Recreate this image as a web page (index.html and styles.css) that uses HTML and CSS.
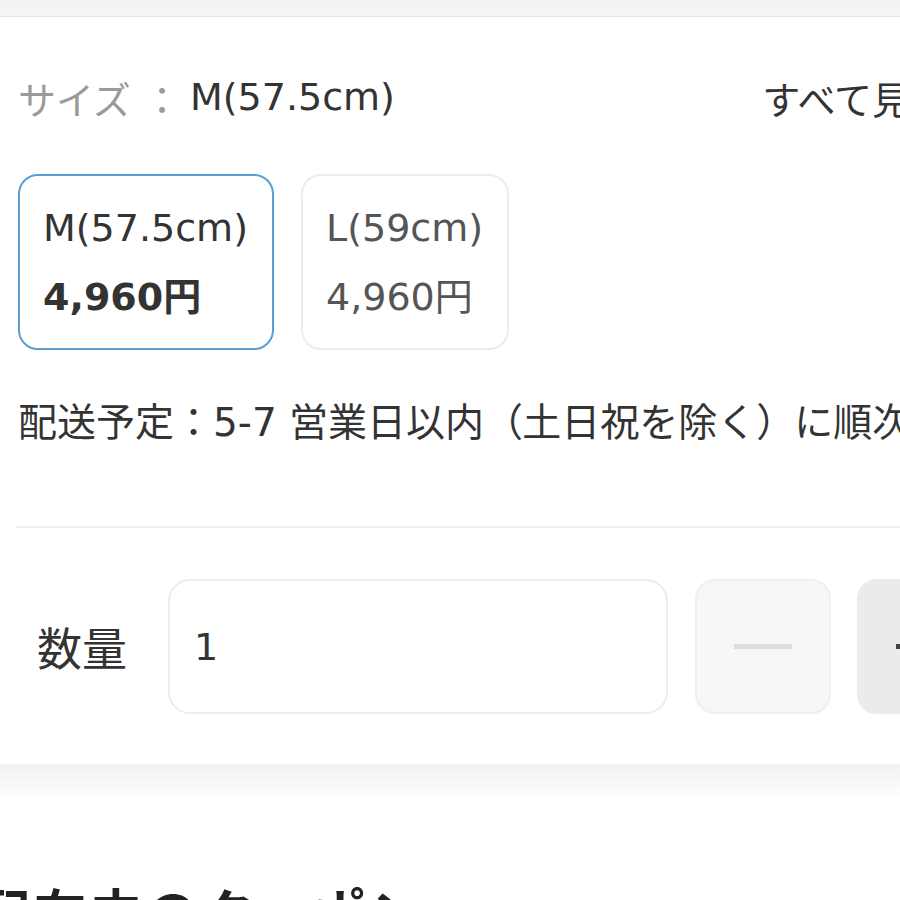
FILE: index.html
```html
<!DOCTYPE html>
<html lang="ja">
<head>
    <meta charset="UTF-8">
    <meta name="viewport" content="width=device-width, initial-scale=1.0">
    <title>サイズ選択</title>
    <link rel="stylesheet" href="styles.css">
</head>
<body>
    <div class="top-edge"></div>

    <section class="options">
        <div class="size-head">
            <span class="size-label">サイズ ：</span>
            <span class="size-value">M(57.5cm)</span>
            <a class="see-all" href="#">すべて見る</a>
        </div>

        <!-- size options -->
        <div class="size-list">
            <div class="size-card selected">
                <div class="size-name">M(57.5cm)</div>
                <div class="size-price">4,960円</div>
            </div>
            <div class="size-card">
                <div class="size-name">L(59cm)</div>
                <div class="size-price">4,960円</div>
            </div>
        </div>

        <p class="delivery">配送予定：5-7 営業日以内<span class="paren">（</span>土日祝を除く<span class="paren">）</span>に順次発送</p>

        <div class="divider"></div>

        <!-- quantity -->
        <div class="qty-row">
            <span class="qty-label">数量</span>
            <div class="qty-input">1</div>
            <button class="qty-btn minus" type="button"><span class="bar"></span></button>
            <button class="qty-btn plus" type="button"><span class="bar"></span></button>
        </div>
    </section>

    <div class="section-gap"></div>

    <h2 class="coupon-title">配布中のクーポン</h2>
</body>
</html>
```

FILE: styles.css
```css
body {
    font-family: "DejaVu Sans", "Noto Sans CJK JP", sans-serif;
    margin: 0;
    padding: 0;
    background-color: #ffffff;
    color: #333333;
    overflow: hidden;
    height: 900px;
}

.top-edge {
    height: 16px;
    background: linear-gradient(#f2f2f2, #f7f7f7);
}

.options {
    width: 966px;
    box-sizing: border-box;
    padding: 54px 18px 50px 18px;
    border-top: 1px solid #e6e6e6;
    background-color: #ffffff;
}

.size-head {
    display: flex;
    align-items: center;
    height: 52px;
    font-size: 38px;
    white-space: nowrap;
}

.size-label {
    color: #9a9a9a;
    margin-right: 9px;
}

.size-value {
    color: #333333;
}

.see-all {
    margin-left: auto;
    color: #333333;
    text-decoration: none;
}

.size-list {
    display: flex;
    gap: 27px;
    margin-top: 51px;
}

.size-card {
    border: 2px solid #ececec;
    border-radius: 20px;
    padding: 26px 24px 25px 23px;
    color: #555555;
    font-size: 38px;
    white-space: nowrap;
}

.size-card.selected {
    border-color: #5a9fd3;
    color: #333333;
}

.size-name,
.size-price {
    line-height: 52px;
}

.size-price {
    margin-top: 17px;
}

.size-card.selected .size-price {
    font-weight: bold;
}

.delivery {
    margin: 47px 0 0 0;
    font-size: 39px;
    line-height: 52px;
    white-space: nowrap;
    color: #333333;
}

.delivery .paren {
    letter-spacing: -1px;
}

.divider {
    margin-top: 77px;
    margin-left: -2px;
    height: 2px;
    background-color: #efefef;
}

.qty-row {
    display: flex;
    align-items: center;
    margin-top: 51px;
    height: 135px;
}

.qty-label {
    flex-shrink: 0;
    margin-left: 19px;
    width: 90px;
    font-size: 45px;
    white-space: nowrap;
    color: #333333;
}

.qty-input {
    flex-shrink: 0;
    margin-left: 41px;
    width: 500px;
    height: 135px;
    box-sizing: border-box;
    border: 2px solid #ececec;
    border-radius: 22px;
    padding-left: 24px;
    display: flex;
    align-items: center;
    font-size: 38px;
    color: #333333;
}

.qty-btn {
    flex-shrink: 0;
    width: 136px;
    height: 135px;
    margin-left: 27px;
    border: 2px solid #efefef;
    border-radius: 20px;
    background-color: #f7f7f7;
    display: flex;
    align-items: center;
    justify-content: center;
    padding: 0;
}

.qty-btn .bar {
    display: block;
    width: 58px;
    height: 5px;
    background-color: #dddddd;
}

.qty-btn.plus {
    margin-left: 26px;
    background-color: #ebebeb;
    border-color: #ebebeb;
}

.qty-btn.plus .bar {
    background-color: #444444;
    position: relative;
}

.qty-btn.plus .bar::after {
    content: "";
    position: absolute;
    left: 26px;
    top: -26px;
    width: 5px;
    height: 58px;
    background-color: #444444;
}

.section-gap {
    height: 37px;
    background: linear-gradient(#f1f1f1, #ffffff);
}

.coupon-title {
    margin: 73px 0 0 0;
    font-family: "Noto Sans CJK JP", sans-serif;
    font-size: 52px;
    line-height: 73px;
    letter-spacing: 4px;
    text-indent: -22px;
    white-space: nowrap;
    color: #222222;
}
```
